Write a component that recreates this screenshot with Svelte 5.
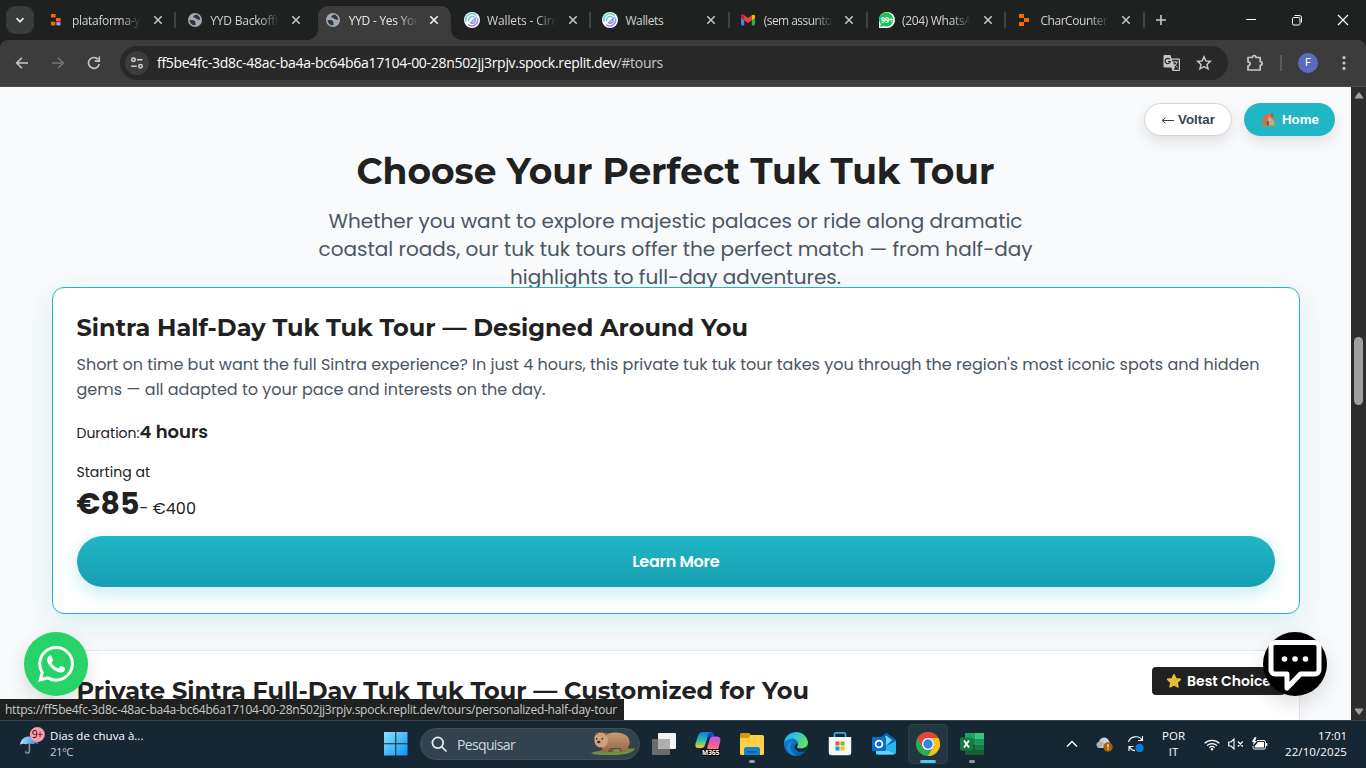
<script>
  const tabs = [
    { title: 'plataforma-y', icon: 'replit2', width: 68 },
    { title: 'YYD Backoffi', icon: 'globe', width: 67.5 },
    { title: 'YYD - Yes You', icon: 'globe', width: 72.5, active: true },
    { title: 'Wallets - Circ', icon: 'circle', width: 70 },
    { title: 'Wallets', icon: 'circle', width: 38 },
    { title: '(sem assunto', icon: 'gmail', width: 68 },
    { title: '(204) WhatsA', icon: 'wa', width: 69.5 },
    { title: 'CharCounter', icon: 'replit', width: 67 }
  ];

  // Tracks the text so that it spans the given width.
  function fit(node, width) {
    const natural = node.getBoundingClientRect().width;
    const count = node.textContent.length;
    node.style.letterSpacing = `${(width - natural) / count}px`;
  }
</script>

<div class="screen">
  <header class="tabstrip">
    <div class="tabsearch">
      <svg width="10" height="10" viewBox="0 0 10 10"><path d="M1.5 3.2 5 6.7l3.5-3.5" fill="none" stroke="#e3e3e3" stroke-width="1.7" /></svg>
    </div>
    <div class="tabs">
      {#each tabs as tab, i}
        <div class="tab" class:active={tab.active} class:nosep={i === 1 || i === 2}>
          <svg class="favicon" width="16" height="16" viewBox="0 0 16 16">
            {#if tab.icon === 'replit2'}
              <path d="M2 2h4.600v3.500H2zM7 6h4.600v3.500H7zM2 9.700h4.300v3.800H2z" fill="#fd6500" /><rect x="7.300" y="10" width="4.200" height="3.500" rx="1" fill="#a58fff" />
            {:else if tab.icon === 'replit'}
              <path d="M2 2h5v4H2zM7 6h5v4H7zM2 10h5v4H2z" fill="#fd6500" />
            {:else if tab.icon === 'globe'}
              <circle cx="8" cy="8" r="7" fill="#a3a8b2" />
              <path d="M2.600 8.200c2-.2 4.200-.1 5.200.9.800.8.300 1.700.700 2.300.300.500 0 1.300-.6 1.900C5 13.300 2.700 11 2.600 8.200zM8.800 2.600c-.3.900-2.500 1.100-2.600 2.200-.1 1.200 2 .7 2.500 1.400.500.8 1.200.9 1.900 1 .9.200 1.200 1.200 2.700.4C13.100 5 11.300 2.900 8.800 2.600z" fill="#30363d" />
            {:else if tab.icon === 'circle'}
              <defs><linearGradient id="cg{i}" x1="0" y1="0" x2=".3" y2="1"><stop offset="0" stop-color="#65dfb1" /><stop offset=".5" stop-color="#71b7ef" /><stop offset="1" stop-color="#a67bf0" /></linearGradient></defs>
              <circle cx="8" cy="8" r="8" fill="#fff" />
              <path d="M12.300 3.600A6 6 0 0 0 2.200 9.500M13.500 6.200A6 6 0 0 1 4 12.500M10.500 5.600A3.300 3.300 0 0 0 4.900 8.900M11.200 7.400A3.200 3.200 0 0 1 6.600 10.900L13 4.700" fill="none" stroke="url(#cg{i})" stroke-width="1.500" />
            {:else if tab.icon === 'gmail'}
              <path d="M1 3.500h3.200v10H2.200A1.200 1.200 0 0 1 1 12.300z" fill="#4285f4" /><path d="M11.800 3.500H15v8.800a1.200 1.200 0 0 1-1.200 1.200h-2z" fill="#34a853" /><path d="M11.800 3.700C13 2 15 2.500 15 4.300v1.500l-3.200 2.500z" fill="#fbbc04" /><path d="M1 5.800V4.300C1 2.500 3 2 4.200 3.200L8 6.100l3.800-2.900v5L8 11.100 4.200 8.200z" fill="#ea4335" /><path d="M1 5.800V4.300C1 2.500 3 2 4.200 3.200v5z" fill="#c5221f" />
            {:else}
              <path d="M0 16V8a8 8 0 1 1 8 8z" fill="#fff" /><path d="M1 15l.8-3A7 7 0 1 1 4.500 14z" fill="#14c656" /><text x="8" y="11" text-anchor="middle" font-size="8.500" font-weight="700" fill="#fff" textLength="12" lengthAdjust="spacingAndGlyphs">99+</text>
            {/if}
          </svg>
          <div class="title" class:short={tab.title === 'Wallets'}><span use:fit={tab.width}>{tab.title}</span></div>
          <svg class="close" width="10" height="10" viewBox="0 0 10 10"><path d="M1.300 1.300l7.400 7.400M8.700 1.300L1.300 8.700" stroke={tab.active ? '#f1f1f1' : '#c4c7c5'} stroke-width="1.600" /></svg>
        </div>
      {/each}
    </div>
    <svg class="plus" width="12" height="12" viewBox="0 0 12 12"><path d="M6 1v10M1 6h10" stroke="#c7c7c7" stroke-width="1.600" /></svg>
    <div class="wincontrols">
      <svg width="12" height="12" viewBox="0 0 12 12"><path d="M1 5.500h10" stroke="#fff" /></svg>
      <svg width="12" height="12" viewBox="0 0 12 12" fill="none" stroke="#fff"><rect x="1.500" y="3.500" width="7.500" height="7.500" rx="1.300" /><path d="M3.500 1.500h5a2 2 0 0 1 2 2v5" /></svg>
      <svg width="12" height="12" viewBox="0 0 12 12"><path d="M1 1l10 10M11 1L1 11" stroke="#fff" stroke-width="1.200" /></svg>
    </div>
  </header>

  <div class="toolbar">
    <svg class="nav" width="16" height="16" viewBox="0 0 16 16" fill="none" stroke="#c7c7c7" stroke-width="1.600"><path d="M14 8H3M8 2.700L2.700 8 8 13.300" /></svg>
    <svg class="nav" width="16" height="16" viewBox="0 0 16 16" fill="none" stroke="#757575" stroke-width="1.600"><path d="M2 8h11M8 2.700L13.300 8 8 13.300" /></svg>
    <svg class="nav" width="16" height="16" viewBox="0 0 16 16" fill="none" stroke="#c7c7c7" stroke-width="1.600"><path d="M13.200 9A5.400 5.400 0 1 1 12 4.400M13.300 1.500v4.600H8.700" /></svg>
    <div class="omnibox">
      <div class="siteinfo">
        <svg width="14" height="14" viewBox="0 0 14 14" fill="none" stroke="#d0d0d0" stroke-width="1.500"><circle cx="3.500" cy="3.700" r="1.700" /><path d="M7 3.700h5.500M1.200 10.200h5.500" /><circle cx="10.500" cy="10.200" r="1.700" /></svg>
      </div>
      <div class="url"><span use:fit={506}>ff5be4fc-3d8c-48ac-ba4a-bc64b6a17104-00-28n502jj3rpjv.spock.replit.dev<i>/#tours</i></span></div>
      <svg class="translate" width="18" height="18" viewBox="0 0 18 18"><path d="M1.500 1h6l1 3.500h7.500a1 1 0 0 1 1 1V16a1 1 0 0 1-1 1H9.500L8.400 13.500H1.500a1 1 0 0 1-1-1V2a1 1 0 0 1 1-1z" fill="#c7c7c7" /><path d="M9 5.700h6.800v10H10.500l1.500-2.200z" fill="#282828" /><path d="M6.800 5.400A2.600 2.600 0 1 0 7.300 7.500H5" fill="none" stroke="#282828" stroke-width="1.200" /><path d="M9.800 8h5M12.300 7v1M14 8c-.5 2-1.500 3.500-3.300 4.500M10.800 9.500l3.700 4" fill="none" stroke="#c7c7c7" /></svg>
      <svg class="star" width="16" height="16" viewBox="0 0 16 16"><path d="M8 1.800l1.800 4.100 4.500.5-3.300 3 1 4.400L8 11.500l-4 2.300 1-4.400-3.300-3 4.500-.5z" fill="none" stroke="#c7c7c7" stroke-width="1.500" /></svg>
    </div>
    <svg class="puzzle" width="18" height="18" viewBox="0 0 18 18"><path d="M2 3.500h4.300C6.300 1 10 1 10 3.500h4.200v4.200c2.600 0 2.600 3.700 0 3.700V16H2v-4.200c2.800 0 2.800-4 0-4z" fill="none" stroke="#c7c7c7" stroke-width="1.700" stroke-linejoin="round" /></svg>
    <div class="divider"></div>
    <div class="avatar">F</div>
    <svg class="kebab" width="4" height="16" viewBox="0 0 4 16" fill="#c7c7c7"><circle cx="2" cy="2.600" r="1.600" /><circle cx="2" cy="8" r="1.600" /><circle cx="2" cy="13.400" r="1.600" /></svg>
  </div>

  <main class="viewport">
    <div class="page">
      <h1><span use:fit={638}>Choose Your Perfect Tuk Tuk Tour</span></h1>
      <div class="intro">
        <p><span use:fit={694}>Whether you want to explore majestic palaces or ride along dramatic</span></p>
        <p><span use:fit={714}>coastal roads, our tuk tuk tours offer the perfect match — from half-day</span></p>
        <p><span use:fit={331}>highlights to full-day adventures.</span></p>
      </div>

      <section class="card featured">
        <h2><span use:fit={671.5}>Sintra Half-Day Tuk Tuk Tour — Designed Around You</span></h2>
        <div class="desc">
          <p><span use:fit={1183}>Short on time but want the full Sintra experience? In just 4 hours, this private tuk tuk tour takes you through the region's most iconic spots and hidden</span></p>
          <p><span use:fit={469}>gems — all adapted to your pace and interests on the day.</span></p>
        </div>
        <div class="duration"><span use:fit={63}>Duration:</span><b use:fit={68.500}>4 hours</b></div>
        <div class="starting"><span use:fit={73.5}>Starting at</span></div>
        <div class="price"><b use:fit={63}>€85</b><span use:fit={56.500}>- €400</span></div>
        <div class="cta"><span use:fit={87}>Learn More</span></div>
      </section>

      <section class="card second">
        <h2><span use:fit={732.5}>Private Sintra Full-Day Tuk Tuk Tour — Customized for You</span></h2>
        <div class="badge">
          <svg width="16" height="16" viewBox="0 0 16 16"><path d="M8 1.800l1.900 4 4.400.6-3.200 3.100.8 4.400L8 11.800l-3.900 2.100.8-4.400L1.700 6.400l4.400-.6z" fill="#e9bd35" stroke="#e9bd35" stroke-width="1.600" stroke-linejoin="round" /></svg>
          <span use:fit={84}>Best Choice</span>
        </div>
      </section>

      <div class="pills">
        <div class="pill back"><svg width="14" height="10" viewBox="0 0 14 10"><path d="M13 5.500H1M4.500 2.800L1 5.500l3.500 2.700" fill="none" stroke="#374151" /></svg><span use:fit={37}>Voltar</span></div>
        <div class="pill home">
          <svg width="15" height="15" viewBox="0 0 15 15"><path d="M4 7.500L9 3.500l4.500 5V14H4z" fill="#d6a578" /><path d="M1.500 8.500L5 5l2 3v6H1.500z" fill="#b77954" /><path d="M.6 8.300L5.200 2h4l5.300 6.300-1.200.9L8.300 4.300l-4 5.500z" fill="#dd6a48" /><path d="M10 1.500h2v4l-2-2z" fill="#a95a3f" /><path d="M5.800 9.300h2.200v4.700H5.800z" fill="#8c4e35" /><path d="M9.200 8.800h2.600v2.500H9.200z" fill="#55c8f2" /><path d="M.5 13.300h14v1.500H.5z" fill="#76a94d" /></svg>
          <span use:fit={37}>Home</span>
        </div>
      </div>

      <div class="float whatsapp">
        <svg width="36" height="36" viewBox="0 0 24 24" fill="#fff"><path d="M17.472 14.382c-.297-.149-1.758-.867-2.030-.967-.273-.099-.471-.148-.670.150-.197.297-.767.966-.940 1.164-.173.199-.347.223-.644.075-.297-.150-1.255-.463-2.390-1.475-.883-.788-1.480-1.761-1.653-2.059-.173-.297-.018-.458.130-.606.134-.133.298-.347.446-.520.149-.174.198-.298.298-.497.099-.198.050-.371-.025-.520-.075-.149-.669-1.612-.916-2.207-.242-.579-.487-.500-.669-.510-.173-.008-.371-.010-.570-.010-.198 0-.520.074-.792.372-.272.297-1.040 1.016-1.040 2.479 0 1.462 1.065 2.875 1.213 3.074.149.198 2.096 3.200 5.077 4.487.709.306 1.262.489 1.694.625.712.227 1.360.195 1.871.118.571-.085 1.758-.719 2.006-1.413.248-.694.248-1.289.173-1.413-.074-.124-.272-.198-.570-.347m-5.421 7.403h-.004a9.870 9.870 0 01-5.031-1.378l-.361-.214-3.741.982.998-3.648-.235-.374a9.860 9.860 0 01-1.510-5.260c.001-5.450 4.436-9.884 9.888-9.884 2.640 0 5.122 1.030 6.988 2.898a9.825 9.825 0 012.893 6.994c-.003 5.450-4.437 9.884-9.885 9.884m8.413-18.297A11.815 11.815 0 0012.050 0C5.495 0 .160 5.335.157 11.892c0 2.096.547 4.142 1.588 5.945L.057 24l6.305-1.654a11.882 11.882 0 005.683 1.448h.005c6.554 0 11.890-5.335 11.893-11.893a11.821 11.821 0 00-3.480-8.413z" /></svg>
      </div>
      <div class="float chat">
        <svg width="64" height="64" viewBox="0 0 64 64"><path d="M12 10.500h40a4 4 0 0 1 4 4V38a4 4 0 0 1-4 4H37.500L24 56V42H12a4 4 0 0 1-4-4V14.500a4 4 0 0 1 4-4z" fill="#000" stroke="#fff" stroke-width="5" stroke-linejoin="round" /><g fill="#fff"><circle cx="21.500" cy="27" r="2.800" /><circle cx="32" cy="27" r="2.800" /><circle cx="42.500" cy="27" r="2.800" /></g></svg>
      </div>
      <div class="status"><span use:fit={612}>https://ff5be4fc-3d8c-48ac-ba4a-bc64b6a17104-00-28n502jj3rpjv.spock.replit.dev/tours/personalized-half-day-tour</span></div>
    </div>
    <div class="scrollbar">
      <svg width="10" height="8" viewBox="0 0 10 8"><path d="M5 1.500L9 7H1z" fill="#9f9f9f" stroke="#9f9f9f" stroke-linejoin="round" /></svg>
      <div class="thumb"></div>
      <svg width="10" height="8" viewBox="0 0 10 8"><path d="M5 6.500L9 1H1z" fill="#9f9f9f" stroke="#9f9f9f" stroke-linejoin="round" /></svg>
    </div>
  </main>

  <footer class="taskbar">
    <div class="weather">
      <svg width="32" height="34" viewBox="0 0 32 34"><defs><linearGradient id="um" x2="1"><stop stop-color="#b5e2ff" /><stop offset="1" stop-color="#268ce4" /></linearGradient></defs><path d="M10 14v12.500c0 3-4 3-4 .3" fill="none" stroke="#8b8f94" stroke-width="1.700" /><path d="M0 20C1 13.500 5 11 10 11c5 0 9 3 9.500 8.500-2-1.500-4-1.500-5.500 0-2.500-1.300-5.500-1.300-8 0-2-1-4-1-6 .5z" fill="url(#um)" /><circle cx="18.500" cy="9" r="8" fill="#ff99a4" /><text x="18.500" y="13" text-anchor="middle" font-size="11" fill="#111" textLength="12">9+</text></svg>
      <div class="forecast"><span use:fit={93.500}>Dias de chuva à...</span><small use:fit={23}>21°C</small></div>
    </div>
    <svg class="start" width="24" height="24" viewBox="0 0 24 24"><defs><linearGradient id="win" x2="1" y2="1"><stop stop-color="#8ae3ff" /><stop offset="1" stop-color="#0a93f5" /></linearGradient></defs><path d="M0 0h11.300v11.300H0zM12.300 0H23.500v11.300H12.300zM0 12.300h11.300v11.200H0zM12.300 12.300h11.200v11.200H12.300z" fill="url(#win)" /></svg>
    <div class="search">
      <svg width="16" height="16" viewBox="0 0 16 16" fill="none" stroke="#e8edf0" stroke-width="1.700"><circle cx="6.800" cy="6.800" r="5.400" /><path d="M10.800 10.800L15 15" stroke-linecap="round" /></svg>
      <span use:fit={58}>Pesquisar</span>
      <svg class="wombat" width="46" height="26" viewBox="0 0 46 26">
        <defs><linearGradient id="fur" x2="0" y2="1"><stop stop-color="#c89a74" /><stop offset="1" stop-color="#93684a" /></linearGradient></defs>
        <path d="M1 22c7-3 26-5 44-4.500-2 4-9 6.500-22 6.500-9 0-19 0-22-2z" fill="#75903c" />
        <path d="M18 16h6l-1 5h-5zM29 16h5v5h-4z" fill="#76533c" />
        <path d="M15 4C20 .5 32 .5 37 5c4 4 3 10 0 13l-1 3h-4l-1-4H20l-3 4h-6l2-5z" fill="url(#fur)" />
        <path d="M4.500 6L6 2.500C9 1 13 1 16 3l2 5c0 6-3 9-7 8.500-5-.5-7-3.500-6.500-10.500z" fill="#cda27c" />
        <path d="M5.500 4.500V1.500l3 1zM14 2.500l2.500-1.500.5 4z" fill="#8a5f48" /><ellipse cx="8.800" cy="11" rx="1.700" ry="1.300" fill="#3b2923" /><circle cx="6.700" cy="7.800" r=".8" fill="#221111" /><circle cx="12.300" cy="7.800" r=".8" fill="#221111" />
      </svg>
    </div>
    <div class="apps">
      <div class="app"><svg width="24" height="24" viewBox="0 0 24 24"><rect x="6" y="1" width="18" height="16" rx="1" fill="#f3f3f3" /><rect x="0" y="7" width="18" height="16" rx="1" fill="#6c6c6c" /><path d="M6 7h12v10H6z" fill="#b0b0b0" /></svg></div>
      <div class="app"><svg width="26" height="26" viewBox="0 0 26 26"><defs><linearGradient id="m1" x2="0" y2="1"><stop stop-color="#087de9" /><stop offset=".5" stop-color="#24b9b5" /><stop offset="1" stop-color="#f4d51f" /></linearGradient><linearGradient id="m2" x2="0" y2="1"><stop stop-color="#ac62ed" /><stop offset=".6" stop-color="#ef58a2" /><stop offset="1" stop-color="#ff8655" /></linearGradient></defs><path d="M8 1h8c2 0 2 2 3 4h-4c-2 0-3 2-4 6l-1 3c-.5 2-2 3-4 3H3c-3 0-3-3-2-6l2-6c1-3 3-4 5-4z" fill="url(#m1)" /><path d="M15 1c2 0 3 2 3.500 4.500H14l-2 3L12.500 4z" fill="#1746c5" /><path d="M17 5.500h5c3 0 4 3 3 6l-2 7h-9c-2 0-2-2-1-5l2-6c.3-1 1-2 2-2z" fill="url(#m2)" /><path d="M6.500 18H25v7H6.500z" fill="#000" /><text x="15.800" y="24" text-anchor="middle" font-size="7.500" font-weight="700" fill="#fff" textLength="17.500" lengthAdjust="spacingAndGlyphs">M365</text></svg></div>
      <div class="app running"><svg width="24" height="24" viewBox="0 0 24 24"><path d="M0 2.500A1.500 1.500 0 0 1 1.500 1H9l3 3-3 3H0z" fill="#d99700" /><path d="M0 6h8l3-3h11.500A1.500 1.500 0 0 1 24 4.500v17a1.500 1.500 0 0 1-1.500 1.500h-21A1.500 1.500 0 0 1 0 21.500z" fill="#ffcf48" /><path d="M4 23v-5.500A2.500 2.500 0 0 1 6.500 15h11a2.500 2.500 0 0 1 2.500 2.500V23z" fill="#1380ce" /><path d="M7 19h10v1.500H7z" fill="#075a9b" /></svg></div>
      <div class="app"><svg width="24" height="24" viewBox="0 0 24 24"><defs><linearGradient id="e1" x2="1" y2=".3"><stop stop-color="#26a9e8" /><stop offset=".5" stop-color="#2ec5d7" /><stop offset="1" stop-color="#65df60" /></linearGradient><linearGradient id="e2" x2="1" y2="1"><stop stop-color="#1389d8" /><stop offset="1" stop-color="#0751a0" /></linearGradient></defs><circle cx="12" cy="12" r="12" fill="url(#e2)" /><path d="M.3 10C2-2 21-4 23.800 9.500c.8 5-3.300 7-7 7-3 0-4.800-1.300-3.500-2.600C16 10 11 5.500 6.500 6.700 3.500 7.300 1.200 9 .3 10z" fill="url(#e1)" /><path d="M24 12c-.7 3-3.700 4.500-7.200 4.500-3 0-4.800-1.300-3.500-2.600.5-.7.8-1.600.6-2.500-2 .3-3.500 1.800-3.300 3.800.3 3 4 5 7.400 4.600 2-.2 3.500-1 4.500-1.800z" fill="#152733" /><path d="M8.500 9.500C4 14 7 22 13.500 24 8 24 4 21 3 16c0-4 2-6.500 5.500-6.500z" fill="#2196dd" opacity=".7" /></svg></div>
      <div class="app"><svg width="24" height="24" viewBox="0 0 24 24"><path d="M6.500 6V2.200C6.500 1.300 7 .9 7.800.9h8.400c.8 0 1.300.4 1.300 1.300V6" fill="none" stroke="#35aee8" stroke-width="1.700" /><path d="M.8 5h22.400v15.500a2.800 2.800 0 0 1-2.800 2.800H3.600A2.800 2.800 0 0 1 .8 20.500z" fill="#f6f6f6" /><path d="M7.500 9.500h4v4h-4z" fill="#f35325" /><path d="M12.500 9.500h4v4h-4z" fill="#81bc06" /><path d="M7.500 14.500h4v4h-4z" fill="#05a6f0" /><path d="M12.500 14.500h4v4h-4z" fill="#ffba08" /></svg></div>
      <div class="app"><svg width="24" height="24" viewBox="0 0 24 24"><path d="M5 8L14.500.8 24 8v5H5z" fill="#0c65b8" /><path d="M14 3.500l6 4.500-6 6-5-5z" fill="#75d4fb" /><path d="M4 22.500V15l10-1 10-5v11a2.500 2.500 0 0 1-2.500 2.500z" fill="#2bb3ee" /><path d="M5 14l17 7.500-1 1H6L4 21z" fill="#62d5fb" /><rect y="5" width="14" height="14" rx="1" fill="#086fc9" /><circle cx="7" cy="12" r="3.400" fill="none" stroke="#fff" stroke-width="1.800" /></svg></div>
      <div class="app focused"><svg width="24" height="24" viewBox="0 0 24 24"><circle cx="12" cy="12" r="12" fill="#33a852" /><path d="M12 0a12 12 0 0 1 10.400 6H12a6 6 0 0 0-5.200 9L1.600 6A12 12 0 0 1 12 0z" fill="#ea4335" /><path d="M22.400 6A12 12 0 0 1 12 24l5.200-9A6 6 0 0 0 12 6z" fill="#fbc116" /><circle cx="12" cy="12" r="6" fill="#fff" /><circle cx="12" cy="12" r="4.700" fill="#397fe8" /></svg></div>
      <div class="app running"><svg width="24" height="24" viewBox="0 0 24 24"><path d="M5 1h19v22H5z" fill="#178449" /><path d="M15 1h9v6h-9z" fill="#35c481" /><path d="M5 1h10v6H5z" fill="#21a366" /><path d="M15 7h9v6h-9z" fill="#20965a" /><path d="M5 13h19v10H5z" fill="#185c37" /><path d="M15 13h9v5h-9z" fill="#107c41" /><rect y="5.500" width="13" height="13" rx="1" fill="#107c41" /><path d="M4 8.500l5 7M9 8.500l-5 7" stroke="#fff" stroke-width="1.900" /></svg></div>
    </div>
    <div class="tray">
      <svg width="12" height="12" viewBox="0 0 12 12"><path d="M1 8.500l5-5 5 5" fill="none" stroke="#fff" stroke-width="1.400" /></svg>
      <svg class="cloud" width="17" height="16" viewBox="0 0 17 16"><path d="M4 12A3.500 3.500 0 0 1 3 5.500C4.500 1 10 0 12.500 4L15 9v3z" fill="#cfd1d3" /><path d="M3 6c2-1 4 0 5 2l-4 4A3 3 0 0 1 3 6z" fill="#aeb1b4" /><circle cx="12" cy="11" r="4.700" fill="#a76107" /><path d="M12 8.300v3.200M12 12.600v1.200" stroke="#fff" stroke-width="1.300" /></svg>
      <svg class="sync" width="18" height="18" viewBox="0 0 18 18"><path d="M1.500 7C3 1 12 0 15 5M15.500 1v4.500H11M2 16v-4.500h4.500M2.500 12c1 2 3 3.500 5.500 3.800" fill="none" stroke="#fff" stroke-width="1.100" /><circle cx="12.500" cy="13" r="4.200" fill="#087be0" /></svg>
      <div class="lang"><span use:fit={23}>POR</span><span>IT</span></div>
      <svg class="wifi" width="16" height="13" viewBox="0 0 16 13" fill="none" stroke="#fff" stroke-width="1.200"><path d="M.7 5.300a10.500 10.500 0 0 1 14.600 0M3 7.600a7.200 7.200 0 0 1 10 0M5.300 9.700a4 4 0 0 1 5.400 0" /><circle cx="8" cy="11.300" r="1.200" fill="#fff" stroke="none" /></svg>
      <svg class="speaker" width="16" height="12" viewBox="0 0 16 12" fill="none" stroke="#fff" stroke-width="1.100"><path d="M.7 4h2.300L6 1v10L3 8H.7zM9.800 3.500l5 5M14.800 3.500l-5 5" /></svg>
      <svg class="battery" width="17" height="14" viewBox="0 0 17 14"><path d="M6 3.500h7a1.500 1.500 0 0 1 1.500 1.500v5.500A1.500 1.500 0 0 1 13 12H3.500A1.500 1.500 0 0 1 2 10.500V9" fill="none" stroke="#fff" /><path d="M6.500 5H13v5.500H3.700V9L6.500 6zM15 6h1.300v3H15z" fill="#fff" /><path d="M3.800 0L.8 5h2L1.800 8.300 6 4H4L5.500.5z" fill="#fff" /></svg>
      <div class="clock"><span use:fit={29}>17:01</span><span use:fit={62}>22/10/2025</span></div>
    </div>
  </footer>
</div>

<style>
  :global(body) { margin: 0; overflow: hidden; background: #202020; }
  .screen { width: 1366px; height: 768px; display: flex; flex-direction: column; overflow: hidden; font-family: 'Open Sans', 'Noto Sans', sans-serif; }
  svg { display: block; flex: none; }
  span, b, small { white-space: nowrap; }
  h1, h2, p { margin: 0; }

  .tabstrip { height: 40px; flex: none; display: flex; align-items: center; background: #1f2120; }
  .tabsearch { width: 28px; height: 28px; margin-left: 6px; border-radius: 9px; background: #393a3a; display: grid; place-items: center; }
  .tabs { display: flex; margin-left: 4px; height: 40px; }
  .tab { width: 138.350px; box-sizing: border-box; display: flex; align-items: center; padding-left: 10.500px; position: relative; }
  .tab:not(.nosep)::after { content: ''; position: absolute; right: 0; top: 12px; width: 2px; height: 16px; background: #424443; border-radius: 1px; }
  .tab.active::before { content: ''; position: absolute; z-index: 0; left: 3px; right: 2px; top: 6px; bottom: 0; border-radius: 10px 10px 0 0; background: #3c3c3c; }
  .tab.active::after { content: ''; display: block; position: absolute; left: -7px; right: -8px; top: 30px; width: auto; height: 10px; background: radial-gradient(circle at 0 0, #1f2120 9.500px, #3c3c3c 10px) left / 10px 10px no-repeat, radial-gradient(circle at 100% 0, #1f2120 9.500px, #3c3c3c 10px) right / 10px 10px no-repeat; }
  .favicon, .title, .close { position: relative; z-index: 1; }
  .title { width: 69px; height: 20px; line-height: 21px; margin-left: 7.500px; overflow: hidden; font-size: 12px; color: #d2d2d2; mask-image: linear-gradient(90deg, #000 72%, transparent); }
  .title.short { mask-image: none; }
  .active .title { color: #e8e8e8; }
  .close { margin-left: 11.500px; }
  .plus { margin-left: 10.500px; }
  .wincontrols { margin-left: auto; margin-right: 17px; display: flex; gap: 34px; }

  .toolbar { height: 46px; flex: none; box-sizing: content-box; border-bottom: 1px solid #4b4b4b; background: #3c3c3c; border-radius: 8px 8px 0 0; display: flex; align-items: center; padding-left: 14px; }
  .nav { margin-right: 20px; }
  .omnibox { width: 1108px; height: 34px; margin-left: -2px; border-radius: 17px; background: #282828; display: flex; align-items: center; }
  .siteinfo { width: 24px; height: 24px; border-radius: 50%; background: #3c3c3c; margin-left: 5px; display: grid; place-items: center; }
  .url { margin-left: 8px; width: 1006px; font-size: 14px; line-height: 20px; color: #fff; }
  .url i { font-style: normal; color: #c7c7c7; }
  .star { margin-left: 15px; }
  .puzzle { margin-left: 18px; }
  .divider { width: 2px; height: 16px; margin-left: 16px; background: #5b5b5b; }
  .avatar { width: 20px; height: 20px; margin-left: 16px; border-radius: 50%; background: #5c6bc0; color: #fff; font: 11px/20px Roboto, sans-serif; text-align: center; }
  .kebab { margin-left: 24px; }

  .viewport { height: 633px; flex: none; display: flex; }
  .page { position: relative; width: 1351px; height: 633px; overflow: hidden; background: #f9fafc; color: #212121; font-family: Poppins, Inter, sans-serif; }
  h1 { margin-top: 62px; height: 44px; line-height: 44px; font-family: Montserrat, Inter, sans-serif; font-size: 36px; font-weight: 700; text-align: center; }
  .intro { margin-top: 14px; color: #4b5563; font-size: 20px; line-height: 28px; text-align: center; }
  .card { position: relative; width: 1248px; box-sizing: border-box; margin-left: 52px; padding: 0 24px 0 23.500px; border-radius: 12px; background: #fff; }
  .featured { height: 327px; margin-top: -4px; border: 1px solid #20b5c4; box-shadow: 0 10px 30px rgba(20, 160, 165, 0.14); }
  h2 { margin-top: 24px; height: 32px; line-height: 32px; font-family: Montserrat, Inter, sans-serif; font-size: 24px; font-weight: 700; }
  .desc { margin-top: 8px; font-size: 16px; line-height: 25px; color: #4b5563; }
  .duration { margin-top: 16px; height: 28px; display: flex; align-items: baseline; font-size: 14px; line-height: 28px; }
  .duration b { font-size: 18px; font-weight: 600; }
  .starting { margin-top: 16px; height: 20px; font-size: 14px; line-height: 20px; }
  .price { height: 36px; margin-top: 4px; display: flex; align-items: baseline; line-height: 36px; font-size: 16px; }
  .price b { font-size: 30px; font-weight: 700; }
  .cta { margin-top: 14px; height: 51px; border-radius: 26px; background: linear-gradient(#20b6c5, #179fb2); box-shadow: 0 6px 18px rgba(32, 182, 197, 0.25); color: #fff; font-size: 16px; font-weight: 600; line-height: 51px; text-align: center; }
  .second { height: 330px; margin-top: 36px; border: 1px solid #e5e7eb; box-shadow: 0 4px 16px rgba(0, 0, 0, 0.03); }
  .badge { position: absolute; right: 14px; top: 16px; width: 133px; height: 28px; box-sizing: border-box; padding-left: 14px; border-radius: 4px; background: #212121; color: #fff; display: flex; align-items: center; gap: 5px; font-size: 14px; font-weight: 600; }
  .pills { position: absolute; right: 16px; top: 16px; display: flex; gap: 12px; font: 700 13.300px/1 'Liberation Sans', Arial, sans-serif; }
  .pill { height: 33px; box-sizing: border-box; border-radius: 17px; display: flex; align-items: center; box-shadow: 0 6px 14px rgba(0, 0, 0, 0.1); }
  .back { width: 88px; border: 1px solid #d1d5db; background: #fff; color: #374151; padding-left: 16px; gap: 3px; }
  .home { width: 91px; background: #20b6c5; color: #fff; padding-left: 17px; gap: 6px; }
  .float { position: absolute; top: 545px; width: 64px; height: 64px; border-radius: 50%; display: grid; place-items: center; box-shadow: 0 8px 20px rgba(0, 0, 0, 0.13); }
  .whatsapp { left: 24px; background: #25d366; }
  .chat { left: 1263px; background: #000; overflow: visible; }
  .status { position: absolute; left: 0; bottom: 0; width: 624px; height: 21px; box-sizing: border-box; padding-left: 5px; background: #1f2120; color: #c9cbca; font: 12px/21px 'Open Sans', sans-serif; }
  .scrollbar { width: 15px; background: #2c2c2c; display: flex; flex-direction: column; align-items: center; padding: 4px 0 4px; box-sizing: border-box; }
  .thumb { width: 9px; height: 68px; border-radius: 5px; background: #9f9f9f; margin: 238px 0 auto; }

  .taskbar { height: 48px; flex: none; box-sizing: border-box; border-top: 1px solid #34444f; background: #152733; display: flex; align-items: center; padding-bottom: 1px; color: #fff; font-size: 12px; }
  .weather { width: 364px; margin-left: 20px; display: flex; align-items: center; }
  .weather svg { width: 30px; margin-top: -4px; }
  .forecast { display: flex; flex-direction: column; align-items: flex-start; line-height: 16px; font-size: 11.500px; }
  .forecast small { font-size: 11.500px; color: #c5ccd1; }
  .search { width: 220px; height: 32px; box-sizing: border-box; margin-left: 12px; border: 1px solid #40505b; border-radius: 16px; background: #32434e; display: flex; align-items: center; padding-left: 10px; font-size: 14px; color: #d2d8dc; }
  .search span { margin-left: 10px; }
  .wombat { margin-left: auto; margin-right: 3px; }
  .apps { display: flex; gap: 4px; margin-left: 4px; }
  .app { position: relative; width: 40px; height: 40px; display: grid; place-items: center; border-radius: 5px; }
  .focused { background: #243640; box-shadow: inset 0 0 0 1px #2d3f49; }
  .running::after, .focused::after { content: ''; position: absolute; bottom: 1px; left: 17px; width: 6px; height: 3px; border-radius: 2px; background: #93999d; }
  .focused::after { left: 12px; width: 16px; background: #4cc2ff; }
  .tray { display: flex; align-items: center; margin-left: auto; margin-right: 19px; }
  .cloud { margin-left: 18px; }
  .sync { margin-left: 14px; }
  .lang { width: 30px; margin-left: 14px; display: flex; flex-direction: column; align-items: center; line-height: 16px; font-size: 11.500px; }
  .wifi { margin-left: 15px; }
  .speaker { margin-left: 8px; }
  .battery { margin-left: 7px; }
  .clock { width: 70px; margin-left: 9.500px; display: flex; flex-direction: column; align-items: flex-end; line-height: 16px; font-size: 11.500px; }
</style>
